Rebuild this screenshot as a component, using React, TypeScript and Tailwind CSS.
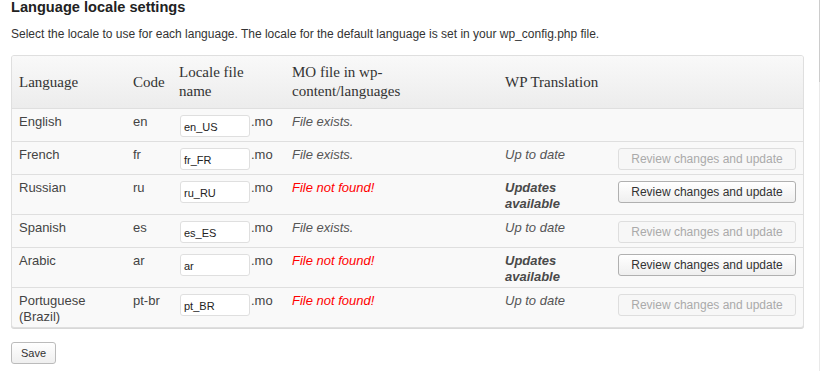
import React from "react";

type Row = {
  lang: React.ReactNode;
  code: string;
  locale: string;
  found: boolean;
  status: "none" | "ok" | "updates";
  h: string;
};

const rows: Row[] = [
  { lang: "English", code: "en", locale: "en_US", found: true, status: "none", h: "h-[33px]" },
  { lang: "French", code: "fr", locale: "fr_FR", found: true, status: "ok", h: "h-[33px]" },
  { lang: "Russian", code: "ru", locale: "ru_RU", found: false, status: "updates", h: "h-[40px]" },
  { lang: "Spanish", code: "es", locale: "es_ES", found: true, status: "ok", h: "h-[33px]" },
  { lang: "Arabic", code: "ar", locale: "ar", found: false, status: "updates", h: "h-[40px]" },
  { lang: "Portuguese (Brazil)", code: "pt-br", locale: "pt_BR", found: false, status: "ok", h: "h-[40px]" },
];

const grid = "grid grid-cols-[113px_46px_113px_213px_113px_193px]";

export default function App() {
  return (
    <div className="flex w-[821px] h-[371px] bg-white overflow-hidden font-['Liberation_Sans',Arial,sans-serif]">
      <div className="w-[819px] pl-[11px]">
        <h2 className="text-[14.6px] leading-[15px] font-bold text-[#222]">Language locale settings</h2>
        <p className="mt-[11px] text-[12px] leading-[16px] text-[#333]">
          Select the locale to use for each language. The locale for the default language is set in your wp_config.php file.
        </p>
        <div className="mt-[13px] w-[793px] border border-[#dfdfdf] rounded-[3px] bg-[#f9f9f9] shadow-[0_1px_0_#d8d8d8] overflow-hidden">
          <div className={`${grid} h-[52px] bg-gradient-to-b from-[#f9f9f9] to-[#ececec] font-['Liberation_Serif',serif] text-[15px] leading-[19px] text-[#333] items-center`}>
            <div className="pl-[7px]">Language</div>
            <div className="pl-2">Code</div>
            <div className="pl-2">Locale file<br />name</div>
            <div className="pl-2">MO file in wp-<br />content/languages</div>
            <div className="pl-2">WP Translation</div>
            <div />
          </div>
          {rows.map((r) => (
            <div key={r.code} className={`${grid} ${r.h} border-t border-[#dfdfdf] text-[13px] leading-[16px] text-[#444]`}>
              <div className="pl-[7px] pt-[5px] pr-1">{r.lang}</div>
              <div className="pl-2 pt-[5px]">{r.code}</div>
              <div className="pl-[9px] pt-[6px] flex items-start">
                <div className="w-[70px] h-[22px] bg-white border border-[#dfdfdf] rounded-[3px] pl-[3px] text-[11px] leading-[20px] text-[#222] pt-px">
                  {r.locale}
                </div>
                <span className="ml-px -mt-px">.mo</span>
              </div>
              <div className="pl-2 pt-[5px] italic">
                {r.found ? (
                  <span className="text-[#555]">File exists.</span>
                ) : (
                  <span className="text-[#ff0000]">File not found!</span>
                )}
              </div>
              <div className="pl-2 pt-[5px] italic pr-2">
                {r.status === "ok" && <span className="text-[#555]">Up to date</span>}
                {r.status === "updates" && (
                  <span className="font-bold text-[#4a4a4a]">
                    Updates
                    <br />
                    available
                  </span>
                )}
              </div>
              <div className="pl-2 pt-[6px]">
                {r.status === "ok" && (
                  <button
                    disabled
                    className="w-[178px] h-[22px] rounded-[3px] border border-[#dedede] bg-[#f7f7f7] text-[12px] leading-[20px] text-[#aaa] font-['Liberation_Sans',Arial,sans-serif]"
                  >
                    Review changes and update
                  </button>
                )}
                {r.status === "updates" && (
                  <button className="w-[178px] h-[22px] rounded-[3px] border border-[#b0b0b0] bg-gradient-to-b from-white to-[#efefef] text-[12px] leading-[20px] text-[#333] font-['Liberation_Sans',Arial,sans-serif]">
                    Review changes and update
                  </button>
                )}
              </div>
            </div>
          ))}
        </div>
        <button className="mt-[14px] w-[45px] h-[22px] rounded-[3px] border border-[#bbb] bg-gradient-to-b from-white to-[#efefef] text-[11px] leading-[20px] text-[#333] font-['Liberation_Sans',Arial,sans-serif]">
          Save
        </button>
      </div>
      <div className="w-px flex flex-col">
        <div className="h-[82px] bg-[#cccccc]" />
        <div className="flex-1 bg-[#e9e9e9]" />
      </div>
      <div className="w-px" />
    </div>
  );
}
